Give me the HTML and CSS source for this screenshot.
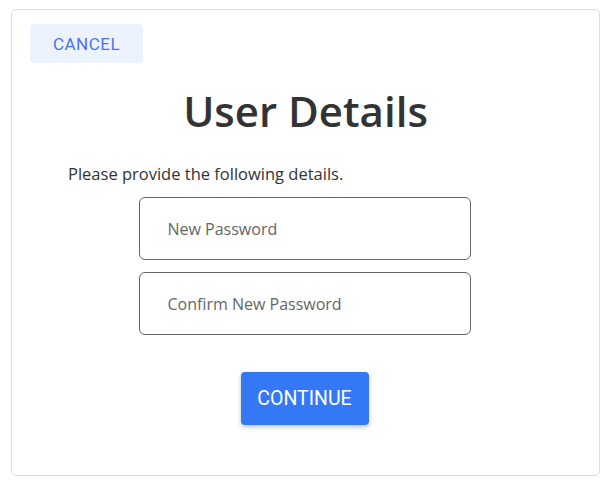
FILE: index.html
```html
<!DOCTYPE html>
<html lang="en">
<head>
    <meta charset="UTF-8">
    <meta name="viewport" content="width=device-width, initial-scale=1.0">
    <title>User Details</title>
    <link rel="stylesheet" href="styles.css">
</head>
<body>
    <div class="card">
        <div class="top-bar">
            <button class="btn-cancel">Cancel</button>
        </div>
        <h1>User Details</h1>
        <div class="form">
            <p class="hint">Please provide the following details.</p>
            <input class="field" type="password" placeholder="New Password">
            <input class="field" type="password" placeholder="Confirm New Password">
            <button class="btn-continue">Continue</button>
        </div>
    </div>
</body>
</html>
```

FILE: styles.css
```css
body {
    margin: 0;
    font-family: "Open Sans", "Noto Sans", sans-serif;
    color: #333;
    background: #fff;
}
.card {
    box-sizing: border-box;
    margin: 9px 0 0 11px;
    width: 589px;
    height: 467px;
    border: 1px solid #ddd;
    border-radius: 5px;
    padding: 14px 18px;
}
.top-bar {
    display: flex;
}
.btn-cancel {
    width: 113px;
    height: 39px;
    padding: 1px 0 0;
    border: none;
    border-radius: 4px;
    background: #edf3fe;
    color: #4d70f5;
    font-family: Roboto, sans-serif;
    font-size: 17px;
    text-transform: uppercase;
    letter-spacing: 0.5px;
    cursor: pointer;
}
h1 {
    margin: 18px 0 0;
    text-align: center;
    font-size: 42px;
    font-weight: 600;
    line-height: 60px;
    color: #333;
}
.form {
    display: flex;
    flex-direction: column;
    align-items: center;
    padding: 0 40px 0 38px;
}
.hint {
    align-self: flex-start;
    margin: 21px 0 12px;
    font-size: 16.5px;
    color: #333;
}
.field {
    box-sizing: border-box;
    width: 332px;
    height: 63px;
    margin-bottom: 12px;
    padding: 0 28px;
    border: 1px solid #666;
    border-radius: 6px;
    font-family: "Open Sans", "Noto Sans", sans-serif;
    font-size: 16px;
    color: #333;
}
.field::placeholder {
    color: #666;
}
.btn-continue {
    margin-top: 25px;
    width: 128px;
    height: 53px;
    border: none;
    border-radius: 4px;
    background: #3478f6;
    color: #fff;
    font-family: Roboto, sans-serif;
    font-size: 19.5px;
    text-transform: uppercase;
    box-shadow: 0 2px 4px rgba(0, 0, 0, 0.25);
    cursor: pointer;
}
```
